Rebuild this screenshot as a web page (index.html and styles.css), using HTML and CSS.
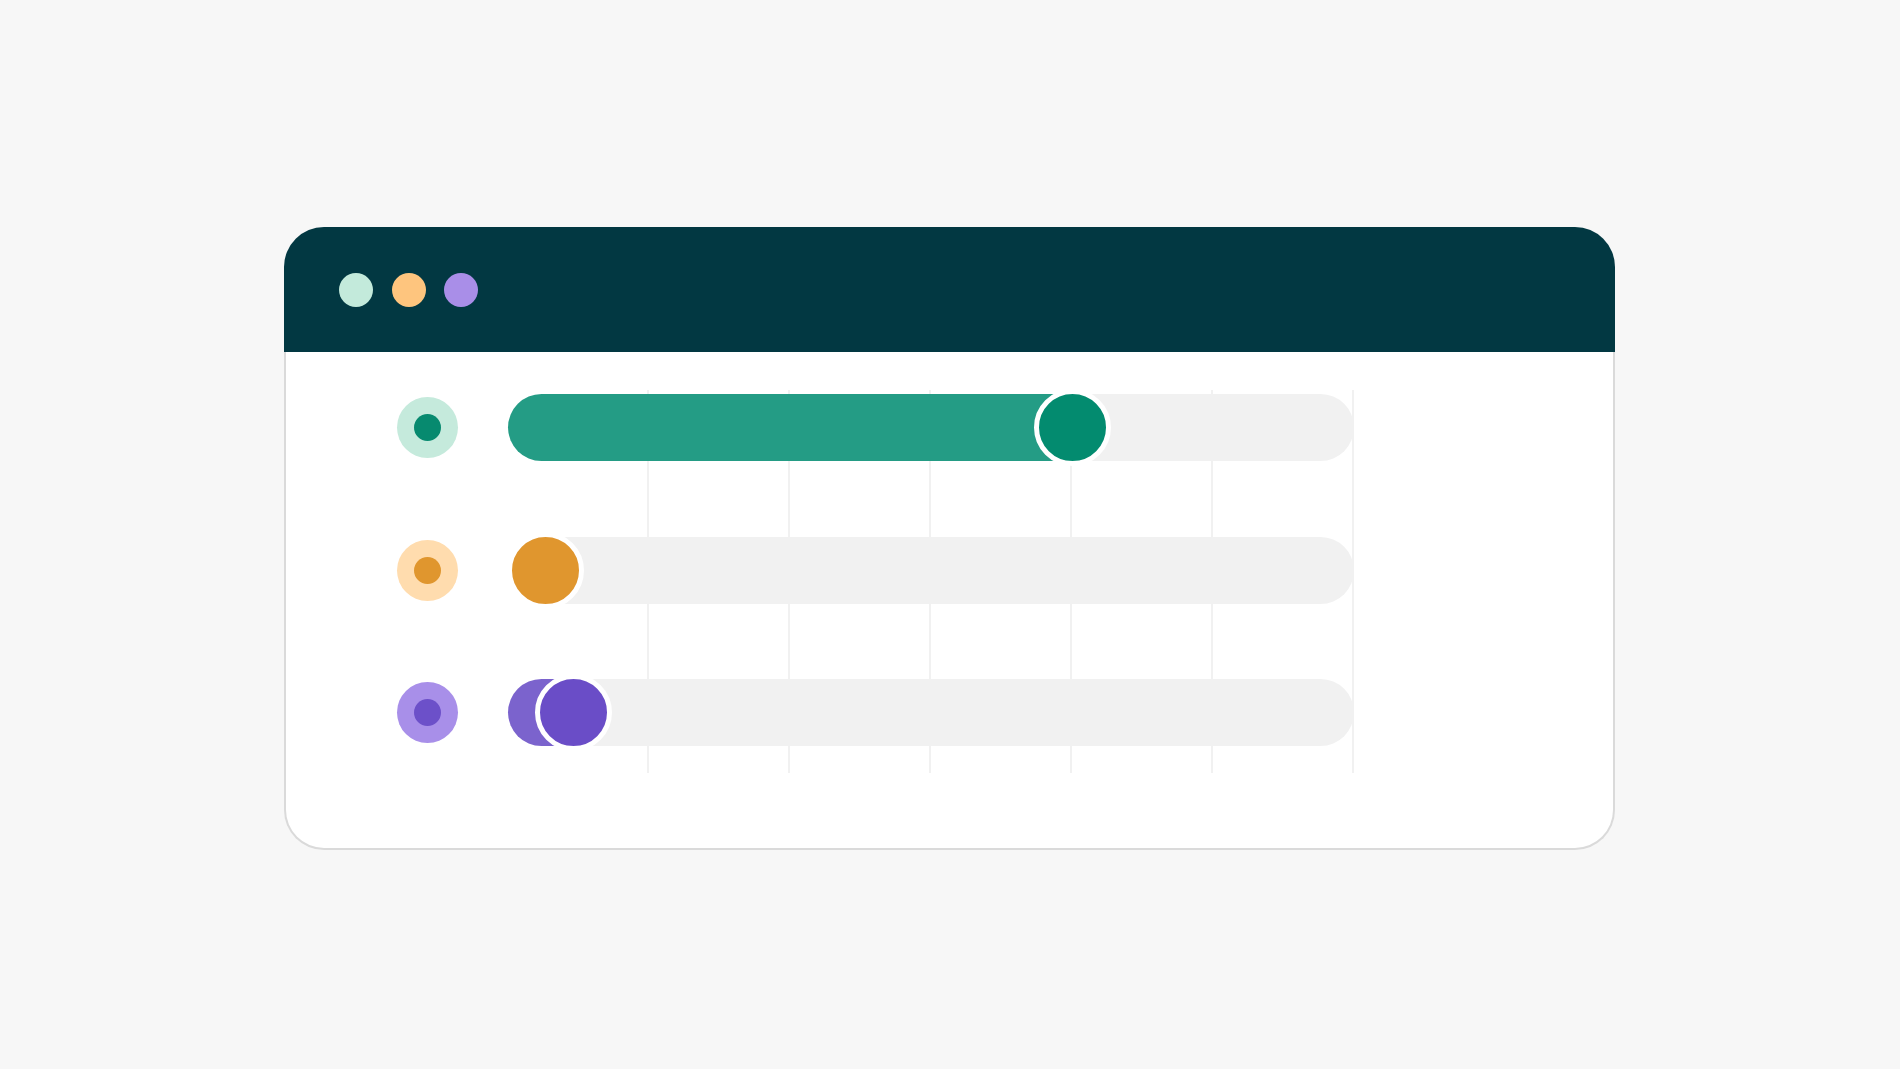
FILE: index.html
```html
<!DOCTYPE html>
<html lang="en">
<head>
  <meta charset="UTF-8">
  <title>Progress</title>
  <link rel="stylesheet" href="styles.css">
</head>
<body>

  <div class="window">
    <div class="titlebar">
      <svg class="dot" viewBox="0 0 34 34"><circle cx="17" cy="17" r="17" fill="#c3eadb"/></svg>
      <svg class="dot" viewBox="0 0 34 34"><circle cx="17" cy="17" r="17" fill="#fec57e"/></svg>
      <svg class="dot" viewBox="0 0 34 34"><circle cx="17" cy="17" r="17" fill="#a98ee8"/></svg>
    </div>

    <div class="pane">
      <div class="rows">
        <div class="grid">
          <span></span><span></span><span></span><span></span><span></span><span></span>
        </div>

        <div class="row green">
          <div class="icon"><span></span></div>
          <div class="bar" style="--v: 66.67%">
            <div class="track"></div>
            <div class="fill"></div>
            <div class="knob"></div>
          </div>
        </div>

        <div class="row orange">
          <div class="icon"><span></span></div>
          <div class="bar" style="--v: 4.4%">
            <div class="track"></div>
            <div class="fill"></div>
            <div class="knob"></div>
          </div>
        </div>

        <div class="row purple">
          <div class="icon"><span></span></div>
          <div class="bar" style="--v: 7.7%">
            <div class="track"></div>
            <div class="fill"></div>
            <div class="knob"></div>
          </div>
        </div>
      </div>
    </div>
  </div>

</body>
</html>
```

FILE: styles.css
```css
* {
  box-sizing: border-box;
}

body {
  margin: 0;
  padding: 0;
  background: #f7f7f7;
  font-family: "Liberation Sans", Arial, sans-serif;
}

.window {
  width: 1331px;
  margin: 227px 0 0 284px;
}

.titlebar {
  height: 125px;
  background: #023842;
  border-radius: 40px 40px 0 0;
  display: flex;
  align-items: center;
  gap: 18.5px;
  padding-left: 55px;
}

.dot {
  width: 34px;
  height: 34px;
  display: block;
}

.pane {
  height: 498px;
  background: #fff;
  border: 2px solid #dadada;
  border-top: none;
  border-radius: 0 0 40px 40px;
  padding: 38px 0 0 111px;
}

.rows {
  position: relative;
  width: 957px;
  display: flex;
  flex-direction: column;
  gap: 75.5px;
  padding: 4px 0 27px;
}

/* vertical guide lines behind the bars */
.grid {
  position: absolute;
  top: 0;
  bottom: 0;
  left: 111px;
  width: 846px;
  display: flex;
}

.grid span {
  flex: 1;
  border-right: 2px solid #f1f1f1;
}

.row {
  display: flex;
  align-items: center;
  gap: 50px;
  height: 67px;
}

.icon {
  width: 61px;
  height: 61px;
  border-radius: 50%;
  display: flex;
  align-items: center;
  justify-content: center;
}

.icon span {
  width: 27px;
  height: 27px;
  border-radius: 50%;
}

.bar {
  position: relative;
  width: 846px;
  height: 67px;
}

.track {
  position: absolute;
  top: 0;
  bottom: 0;
  left: var(--v);
  right: 0;
  background: #f1f1f1;
  border-radius: 0 34px 34px 0;
}

.fill {
  position: absolute;
  top: 0;
  bottom: 0;
  left: 0;
  width: calc(var(--v) + 20px);
  min-width: 67px;
  border-radius: 34px;
}

.knob {
  position: absolute;
  top: -5px;
  left: calc(var(--v) - 38.5px);
  width: 77px;
  height: 77px;
  border: 5px solid #fff;
  border-radius: 50%;
}

.green .icon { background: #c5eadc; }
.green .icon span { background: #078a6f; }
.green .fill { background: #249c85; }
.green .knob { background: #038b6f; }

.orange .icon { background: #ffdcae; }
.orange .icon span { background: #e0962e; }
.orange .fill { background: #e39a35; }
.orange .knob { background: #e0962e; }

.purple .icon { background: #a88fe9; }
.purple .icon span { background: #6c50c9; }
.purple .fill { background: #7b63cd; }
.purple .knob { background: #6a4dc7; }
```
